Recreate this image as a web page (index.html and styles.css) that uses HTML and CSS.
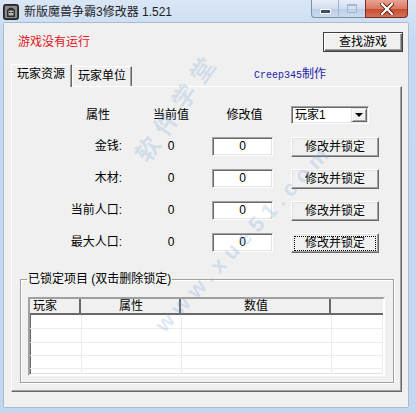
FILE: index.html
```html
<!DOCTYPE html>
<html lang="zh-CN">
<head>
  <meta charset="UTF-8">
  <title>新版魔兽争霸3修改器 1.521</title>
  <link rel="stylesheet" href="styles.css">
</head>
<body>
  <div class="window">
    <div class="titlebar">
      <svg class="app-icon" width="16" height="16" viewBox="0 0 16 16">
        <rect x="0.5" y="0.5" width="15" height="15" rx="2" fill="#3a3a3a" stroke="#222"/>
        <rect x="2" y="2" width="12" height="12" rx="1" fill="#8c8c8c"/>
        <path d="M4 13 L4 6 Q8 1 12 6 L12 13 Z" fill="#2c2c2c"/>
        <rect x="5.5" y="6.5" width="5" height="5" fill="#b8b8b8"/>
        <rect x="6" y="8" width="1.5" height="1" fill="#222"/>
        <rect x="8.5" y="8" width="1.5" height="1" fill="#222"/>
      </svg>
      <span class="title">新版魔兽争霸3修改器 1.521</span>
      <div class="controls">
        <div class="ctl min"><span class="min-bar"></span></div>
        <div class="ctl max"><span class="max-box"></span></div>
        <div class="ctl close">
          <svg width="14" height="12" viewBox="0 0 14 12">
            <path d="M2 1 L12 11 M12 1 L2 11" stroke="#5a1a10" stroke-width="4" stroke-linecap="square"/>
            <path d="M2 1 L12 11 M12 1 L2 11" stroke="#fff" stroke-width="2.2" stroke-linecap="square"/>
          </svg>
        </div>
      </div>
    </div>

    <div class="client">
      <div class="top-row">
        <span class="status">游戏没有运行</span>
        <button class="btn default">查找游戏</button>
      </div>

      <div class="tabstrip">
        <div class="tab active">玩家资源</div>
        <div class="tab">玩家单位</div>
        <div class="credit"><span class="mono">Creep345</span>制作</div>
      </div>

      <div class="panel">
        <div class="grid">
          <div class="head c1">属性</div>
          <div class="head c2">当前值</div>
          <div class="head c3">修改值</div>
          <div class="combo">
            <span class="combo-text">玩家1</span>
            <span class="combo-btn"><span class="arrow"></span></span>
          </div>

          <div class="label">金钱:</div>
          <div class="value">0</div>
          <div class="edit">0</div>
          <button class="btn">修改并锁定</button>

          <div class="label">木材:</div>
          <div class="value">0</div>
          <div class="edit">0</div>
          <button class="btn">修改并锁定</button>

          <div class="label">当前人口:</div>
          <div class="value">0</div>
          <div class="edit">0</div>
          <button class="btn">修改并锁定</button>

          <div class="label">最大人口:</div>
          <div class="value">0</div>
          <div class="edit">0</div>
          <button class="btn focus"><span>修改并锁定</span></button>
        </div>

        <fieldset class="group">
          <legend>已锁定项目 (双击删除锁定)</legend>
          <div class="listview">
            <table>
              <thead>
                <tr>
                  <th class="col-player">玩家</th>
                  <th class="col-attr">属性</th>
                  <th class="col-num">数值</th>
                  <th class="col-rest"></th>
                </tr>
              </thead>
              <tbody>
                <tr><td></td><td></td><td></td><td></td></tr>
                <tr><td></td><td></td><td></td><td></td></tr>
                <tr><td></td><td></td><td></td><td></td></tr>
                <tr><td></td><td></td><td></td><td></td></tr>
                <tr><td></td><td></td><td></td><td></td></tr>
              </tbody>
            </table>
          </div>
        </fieldset>
      </div>
    </div>

    <div class="watermark wm-cn">软件学堂</div>
    <div class="watermark wm-url">www.xue51.com</div>
  </div>
</body>
</html>
```

FILE: styles.css
```css
body {
  margin: 0;
  padding: 0;
  width: 416px;
  height: 413px;
  overflow: hidden;
  font-family: 'Liberation Sans', 'Noto Sans CJK SC', sans-serif;
  font-size: 12px;
  color: #000;
}
.window {
  position: relative;
  width: 416px;
  height: 413px;
  display: flex;
  flex-direction: column;
  background: linear-gradient(#d9e6f6, #c6d9f0 40px, #c4d7ef);
  overflow: hidden;
}
.titlebar {
  height: 23px;
  display: flex;
  align-items: flex-start;
  padding-left: 3px;
  flex-shrink: 0;
}
.app-icon {
  margin-top: 4px;
}
.title {
  margin: 4px 0 0 5px;
  line-height: 16px;
  font-size: 12px;
  color: #1e1e1e;
}
.controls {
  margin-left: auto;
  margin-right: 8px;
  display: flex;
  height: 18px;
}
.ctl {
  height: 17px;
  display: flex;
  align-items: center;
  justify-content: center;
  border: 1px solid #7d8fa7;
  border-top: none;
}
.ctl.min {
  width: 26px;
  border-radius: 0 0 0 4px;
  border-right: none;
  background: linear-gradient(#e7eef8, #d0ddef 50%, #bccde5 51%, #cbdaef);
}
.ctl.max {
  width: 26px;
  border-left: 1px solid #a4b4ca;
  border-right: none;
  background: linear-gradient(#e7eef8, #d0ddef 50%, #bccde5 51%, #cbdaef);
}
.ctl.close {
  width: 41px;
  border-radius: 0 0 4px 0;
  border-color: #7a2c22;
  background: linear-gradient(#e8a394, #d97a63 50%, #c84a2e 51%, #d2715a);
}
.min-bar {
  width: 9px;
  height: 3px;
  margin-top: 5px;
  background: #3c4f66;
  border: 1px solid #fff;
}
.max-box {
  width: 8px;
  height: 6px;
  border: 1px solid #a9b8cc;
  border-top-width: 2px;
}

.client {
  flex: 1;
  margin: 0 8px 6px 4px;
  background: #f0f0f0;
  box-shadow: -1px 0 0 #a9bbd3, 1px 0 0 #a9bbd3, 0 1px 0 #a9bbd3, 0 -1px 0 #a9bbd3;
  display: flex;
  flex-direction: column;
}
.top-row {
  display: flex;
  align-items: center;
  justify-content: space-between;
  padding: 9px 5px 0 14px;
}
.status {
  color: #e4141e;
  line-height: 14px;
}

.btn {
  font-family: 'Liberation Sans', 'Noto Sans CJK SC', sans-serif;
  font-size: 12px;
  color: #000;
  background: #f0f0f0;
  padding: 0;
  border: 1px solid;
  border-color: #fff #696969 #696969 #fff;
  box-shadow: inset -1px -1px 0 #a0a0a0, inset 1px 1px 0 #e3e3e3;
  width: 88px;
  height: 20px;
  line-height: 16px;
  text-align: center;
}
.btn.default {
  width: 80px;
  border-color: #404040;
  box-shadow: inset 1px 1px 0 #fff, inset -1px -1px 0 #696969, inset -2px -2px 0 #a0a0a0;
}
.btn.focus span {
  display: inline-block;
  width: 80px;
  line-height: 13px;
  outline: 1px dotted #000;
}

.tabstrip {
  margin-top: 12px;
  padding-left: 9px;
  display: flex;
  align-items: flex-end;
  height: 22px;
  position: relative;
  z-index: 1;
}
.tab {
  height: 19px;
  line-height: 18px;
  padding: 0 5px;
  border: 1px solid;
  border-color: #fff #696969 transparent #fff;
  box-shadow: inset -1px 0 0 #a0a0a0;
  border-bottom: none;
  background: #f0f0f0;
}
.tab.active {
  height: 22px;
  line-height: 19px;
  margin-left: -2px;
  padding: 0 6px 0 5px;
  margin-bottom: -1px;
}
.credit {
  margin-left: 122px;
  align-self: center;
  color: #1c1ca6;
  font-size: 12px;
  line-height: 14px;
  white-space: nowrap;
}
.mono {
  font-family: 'Liberation Mono', monospace;
  font-size: 10px;
}

.panel {
  flex: 1;
  margin: 0 6px 15px 7px;
  border: 1px solid;
  border-color: #fff #696969 #696969 #fff;
  box-shadow: inset -1px -1px 0 #a0a0a0;
  display: flex;
  flex-direction: column;
}
.grid {
  display: grid;
  grid-template-columns: 60px 86px 61px 88px;
  grid-template-rows: 19px 20px 20px 20px 20px;
  column-gap: 0;
  row-gap: 12px;
  margin: 19px 0 0 54px;
}
.grid > :nth-child(4n) {
  margin-left: 18px;
}
.head {
  text-align: center;
  line-height: 18px;
  padding-left: 4px;
}
.label {
  text-align: right;
  padding-right: 4px;
  line-height: 19px;
}
.value {
  text-align: center;
  padding-left: 4px;
  line-height: 19px;
}
.edit {
  height: 19px;
  box-sizing: border-box;
  background: #fff;
  border: 1px solid;
  border-color: #a0a0a0 #fff #fff #a0a0a0;
  box-shadow: inset 1px 1px 0 #696969, inset -1px -1px 0 #e3e3e3;
  text-align: center;
  line-height: 17px;
}
.combo {
  width: 78px;
  height: 18px;
  box-sizing: border-box;
  background: #fff;
  border: 1px solid;
  border-color: #a0a0a0 #fff #fff #a0a0a0;
  box-shadow: inset 1px 1px 0 #696969, inset -1px -1px 0 #e3e3e3;
  display: flex;
  align-items: center;
  padding: 1px;
}
.combo-text {
  flex: 1;
  padding-left: 2px;
  line-height: 14px;
}
.combo-btn {
  width: 16px;
  height: 14px;
  box-sizing: border-box;
  background: #f0f0f0;
  border: 1px solid;
  border-color: #e3e3e3 #696969 #696969 #e3e3e3;
  box-shadow: inset 1px 1px 0 #fff, inset -1px -1px 0 #a0a0a0;
  display: flex;
  align-items: center;
  justify-content: center;
}
.arrow {
  width: 0;
  height: 0;
  border-left: 4px solid transparent;
  border-right: 4px solid transparent;
  border-top: 4px solid #000;
}

.group {
  margin: 19px 7px 8px 8px;
  padding: 0 8px 6px 6px;
  border: 1px solid #a0a0a0;
  box-shadow: 1px 1px 0 #fff, inset 1px 1px 0 #fff;
  min-width: 0;
}
.group legend {
  padding: 0 1px;
  line-height: 14px;
}
.listview {
  margin: 11px 0 0 1px;
  height: 79px;
  box-sizing: border-box;
  border: 2px solid;
  border-color: #a0a0a0 #fff #fff #a0a0a0;
  box-shadow: inset 1px 1px 0 #696969, inset -1px -1px 0 #e3e3e3;
  background: #fff;
  overflow: hidden;
}
.listview table {
  width: 353px;
  border-collapse: collapse;
  table-layout: fixed;
}
.listview th {
  height: 14px;
  padding: 0;
  font-weight: normal;
  line-height: 14px;
  background: #f0f0f0;
  border-bottom: 2px solid #696969;
  box-shadow: inset -2px 0 0 #696969, inset -1px 0 0 #fff;
  text-align: center;
}
.listview th.col-player {
  width: 48px;
  text-align: left;
  padding-left: 3px;
}
.listview th.col-attr { width: 100px; }
.listview th.col-num { width: 150px; }
.listview th.col-rest { box-shadow: none; }
.listview td {
  height: 13px;
  padding: 0;
  border-bottom: 1px solid #ececec;
  border-right: 1px solid #ececec;
}
.listview tbody tr:nth-child(n+3) td {
  height: 12px;
}

.watermark {
  position: absolute;
  pointer-events: none;
  color: rgba(120, 165, 215, 0.26);
  font-weight: bold;
  white-space: nowrap;
}
.wm-cn {
  left: 112px;
  top: 88px;
  font-size: 24px;
  letter-spacing: 8px;
  transform: rotate(-55deg);
}
.wm-url {
  left: 120px;
  top: 225px;
  font-size: 22px;
  letter-spacing: 6px;
  transform: rotate(-47deg);
}
```
